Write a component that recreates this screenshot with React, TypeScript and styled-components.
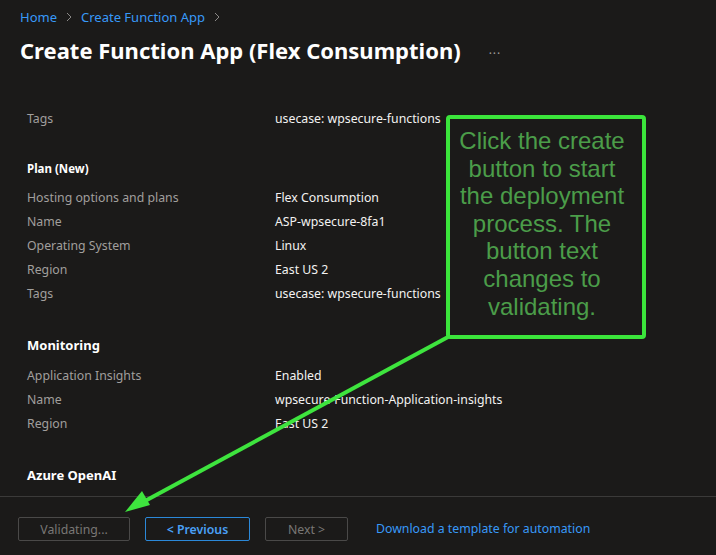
import React from "react";
import styled, { createGlobalStyle } from "styled-components";

const GlobalStyle = createGlobalStyle`
  html, body {
    margin: 0;
    padding: 0;
    background: #1b1a19;
  }
  * {
    box-sizing: border-box;
  }
`;

const Page = styled.div`
  position: relative;
  width: 716px;
  height: 555px;
  overflow: hidden;
  background: #1b1a19;
  font-family: "Noto Sans", "Open Sans", sans-serif;
  display: flex;
  flex-direction: column;
`;

const Header = styled.div`
  padding: 7px 20px 0 20px;
  height: 106px;
`;

const Breadcrumb = styled.div`
  display: flex;
  align-items: center;
  gap: 9px;
  height: 19px;
  font-size: 13px;
`;

const Crumb = styled.span`
  color: #3899f8;
`;

const Chevron = () => (
  <svg width="6" height="10" viewBox="0 0 6 10">
    <path d="M1 1 L5 5 L1 9" fill="none" stroke="#8a8886" strokeWidth="1" />
  </svg>
);

const TitleRow = styled.div`
  display: flex;
  align-items: center;
  gap: 28px;
  margin-top: 10px;
`;

const Title = styled.h1`
  margin: 0;
  font-size: 22px;
  font-weight: 700;
  color: #ffffff;
  line-height: 28px;
`;

const More = styled.span`
  color: #a19f9d;
  font-size: 12px;
  letter-spacing: 1px;
  margin-top: -2px;
`;

const Content = styled.div`
  flex: 1;
  overflow: hidden;
  padding-left: 27px;
`;

const Section = styled.div<{ $gap?: number }>`
  margin-top: ${(p) => p.$gap ?? 0}px;
`;

const SectionTitle = styled.div<{ $size: number; $after: number }>`
  font-size: ${(p) => p.$size}px;
  font-weight: 700;
  color: #ffffff;
  height: 20px;
  line-height: 20px;
  margin-bottom: ${(p) => p.$after}px;
`;

const Row = styled.div`
  display: grid;
  grid-template-columns: 248px 1fr;
  height: 24px;
  align-items: center;
  font-size: 12.3px;
`;

const Label = styled.span`
  color: #a19f9d;
`;

const Value = styled.span`
  color: #f3f2f1;
`;

const Footer = styled.div`
  height: 59px;
  border-top: 1px solid #3b3a39;
  display: flex;
  align-items: flex-start;
  padding: 20px 0 0 18px;
  gap: 15px;
  font-size: 12.3px;
`;

const Button = styled.button<{ $primary?: boolean; $w: number }>`
  width: ${(p) => p.$w}px;
  height: 24px;
  background: transparent;
  border: 1px solid ${(p) => (p.$primary ? "#2b88d8" : "#4a4948")};
  border-radius: 2px;
  color: ${(p) => (p.$primary ? "#4aa0f5" : "#797775")};
  font-family: inherit;
  font-size: 12.3px;
  font-weight: ${(p) => (p.$primary ? 600 : 400)};
  padding: 0;
`;

const Link = styled.span`
  color: #3899f8;
  margin-left: 13px;
  line-height: 23px;
`;

const Callout = styled.div`
  position: absolute;
  left: 446px;
  top: 115px;
  width: 200px;
  height: 224px;
  border: 4px solid #3be53b;
  border-radius: 4px;
  background: #1b1a19;
  padding: 8px 8px 0 0;
  color: #4b9d49;
  font-family: "Liberation Sans", Arial, sans-serif;
  font-size: 24px;
  line-height: 27.6px;
  text-align: center;
  z-index: 2;
`;

const ArrowLayer = styled.svg`
  position: absolute;
  left: 0;
  top: 0;
  width: 716px;
  height: 555px;
  pointer-events: none;
  z-index: 1;
`;

type Item = [string, string];

const plan: Item[] = [
  ["Hosting options and plans", "Flex Consumption"],
  ["Name", "ASP-wpsecure-8fa1"],
  ["Operating System", "Linux"],
  ["Region", "East US 2"],
  ["Tags", "usecase: wpsecure-functions"],
];

const monitoring: Item[] = [
  ["Application Insights", "Enabled"],
  ["Name", "wpsecure-Function-Application-insights"],
  ["Region", "East US 2"],
];

const calloutLines = [
  "Click the create",
  "button to start",
  "the deployment",
  "process. The",
  "button text",
  "changes to",
  "validating.",
];

const Rows = ({ items }: { items: Item[] }) => (
  <>
    {items.map(([k, v], i) => (
      <Row key={i}>
        <Label>{k}</Label>
        <Value>{v}</Value>
      </Row>
    ))}
  </>
);

export default function App() {
  return (
    <>
      <GlobalStyle />
      <Page>
        <Header>
          <Breadcrumb>
            <Crumb>Home</Crumb>
            <Chevron />
            <Crumb>Create Function App</Crumb>
            <Chevron />
          </Breadcrumb>
          <TitleRow>
            <Title>Create Function App (Flex Consumption)</Title>
            <More>...</More>
          </TitleRow>
        </Header>

        <Content>
          <Rows items={[["Tags", "usecase: wpsecure-functions"]]} />
          <Section $gap={29}>
            <SectionTitle $size={11.5} $after={6}>
              Plan (New)
            </SectionTitle>
            <Rows items={plan} />
          </Section>
          <Section $gap={30}>
            <SectionTitle $size={13} $after={8}>
              Monitoring
            </SectionTitle>
            <Rows items={monitoring} />
          </Section>
          <Section $gap={30}>
            <SectionTitle $size={13} $after={8}>
              Azure OpenAI
            </SectionTitle>
          </Section>
        </Content>

        <Footer>
          <Button $w={112}>Validating...</Button>
          <Button $w={105} $primary>
            &lt; Previous
          </Button>
          <Button $w={83}>Next &gt;</Button>
          <Link>Download a template for automation</Link>
        </Footer>

        <ArrowLayer viewBox="0 0 716 555">
          <line
            x1={448}
            y1={337}
            x2={145}
            y2={501}
            stroke="#3ee43e"
            strokeWidth={4}
          />
          <polygon points="125,512 150,505 142,491" fill="#3ee43e" />
        </ArrowLayer>

        <Callout>
          {calloutLines.map((l, i) => (
            <div key={i}>{l}</div>
          ))}
        </Callout>
      </Page>
    </>
  );
}
